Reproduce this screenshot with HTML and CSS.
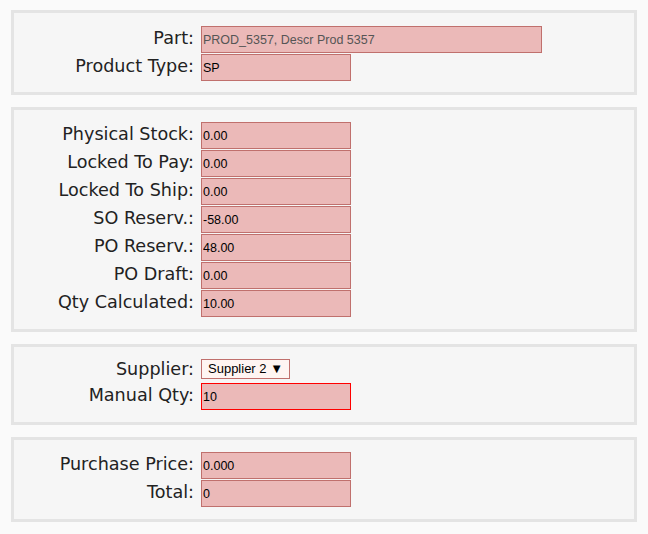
FILE: index.html
```html
<!DOCTYPE html>
<html>
<head>
<meta charset="utf-8">
<link rel="stylesheet" href="styles.css">
</head>
<body>
<div class="page">
  <div class="group first">
    <div class="row"><label class="lbl">Part:</label><input class="fld wide ro" value="PROD_5357, Descr Prod 5357" readonly></div>
    <div class="row"><label class="lbl">Product Type:</label><input class="fld" value="SP" readonly></div>
  </div>
  <div class="group">
    <div class="row"><label class="lbl">Physical Stock:</label><input class="fld" value="0.00" readonly></div>
    <div class="row"><label class="lbl">Locked To Pay:</label><input class="fld" value="0.00" readonly></div>
    <div class="row"><label class="lbl">Locked To Ship:</label><input class="fld" value="0.00" readonly></div>
    <div class="row"><label class="lbl">SO Reserv.:</label><input class="fld" value="-58.00" readonly></div>
    <div class="row"><label class="lbl">PO Reserv.:</label><input class="fld" value="48.00" readonly></div>
    <div class="row"><label class="lbl">PO Draft:</label><input class="fld" value="0.00" readonly></div>
    <div class="row"><label class="lbl">Qty Calculated:</label><input class="fld" value="10.00" readonly></div>
  </div>
  <div class="group">
    <div class="row short"><label class="lbl">Supplier:</label><span class="sel">Supplier 2 ▼</span></div>
    <div class="row"><label class="lbl">Manual Qty:</label><input class="fld err" value="10"></div>
  </div>
  <div class="group">
    <div class="row"><label class="lbl">Purchase Price:</label><input class="fld" value="0.000" readonly></div>
    <div class="row"><label class="lbl">Total:</label><input class="fld" value="0" readonly></div>
  </div>
</div>
</body>
</html>
```
FILE: styles.css
```css
html, body {
  margin: 0;
  padding: 0;
  background: #fafafa;
}
.page {
  padding: 10px 11px;
  display: flex;
  flex-direction: column;
  gap: 12px;
}
.group {
  border: 3px solid #e4e4e4;
  background: #f6f6f6;
  padding: 12px 0 12px 0;
  display: flex;
  flex-direction: column;
  gap: 1px;
}
.group.first {
  padding: 13px 0 11px 0;
}
.row {
  display: flex;
  align-items: center;
  height: 27px;
}
.row.short {
  height: 23px;
  align-items: flex-start;
}
.lbl {
  width: 180px;
  padding-right: 7px;
  text-align: right;
  font-family: "DejaVu Sans", sans-serif;
  font-size: 17.6px;
  line-height: 20px;
  margin-top: -3px;
  color: #222;
}
.row.short .lbl {
  margin-top: 0;
}
.fld {
  box-sizing: border-box;
  width: 150px;
  height: 27px;
  margin: 0;
  padding: 0 1px;
  border: 1px solid #c0706d;
  background: #ebb9b8;
  font-family: "Liberation Sans", Arial, sans-serif;
  font-size: 12.5px;
  color: #000;
  outline: none;
}
.fld.wide {
  width: 341px;
}
.fld.ro {
  color: #555;
}
.fld.err {
  border-color: #ff0000;
}
.sel {
  box-sizing: border-box;
  height: 20px;
  padding: 0 6px;
  border: 1px solid #c0706d;
  background: #fff5f2;
  font-family: "Liberation Sans", Arial, sans-serif;
  font-size: 13px;
  line-height: 18px;
  color: #000;
}
```
